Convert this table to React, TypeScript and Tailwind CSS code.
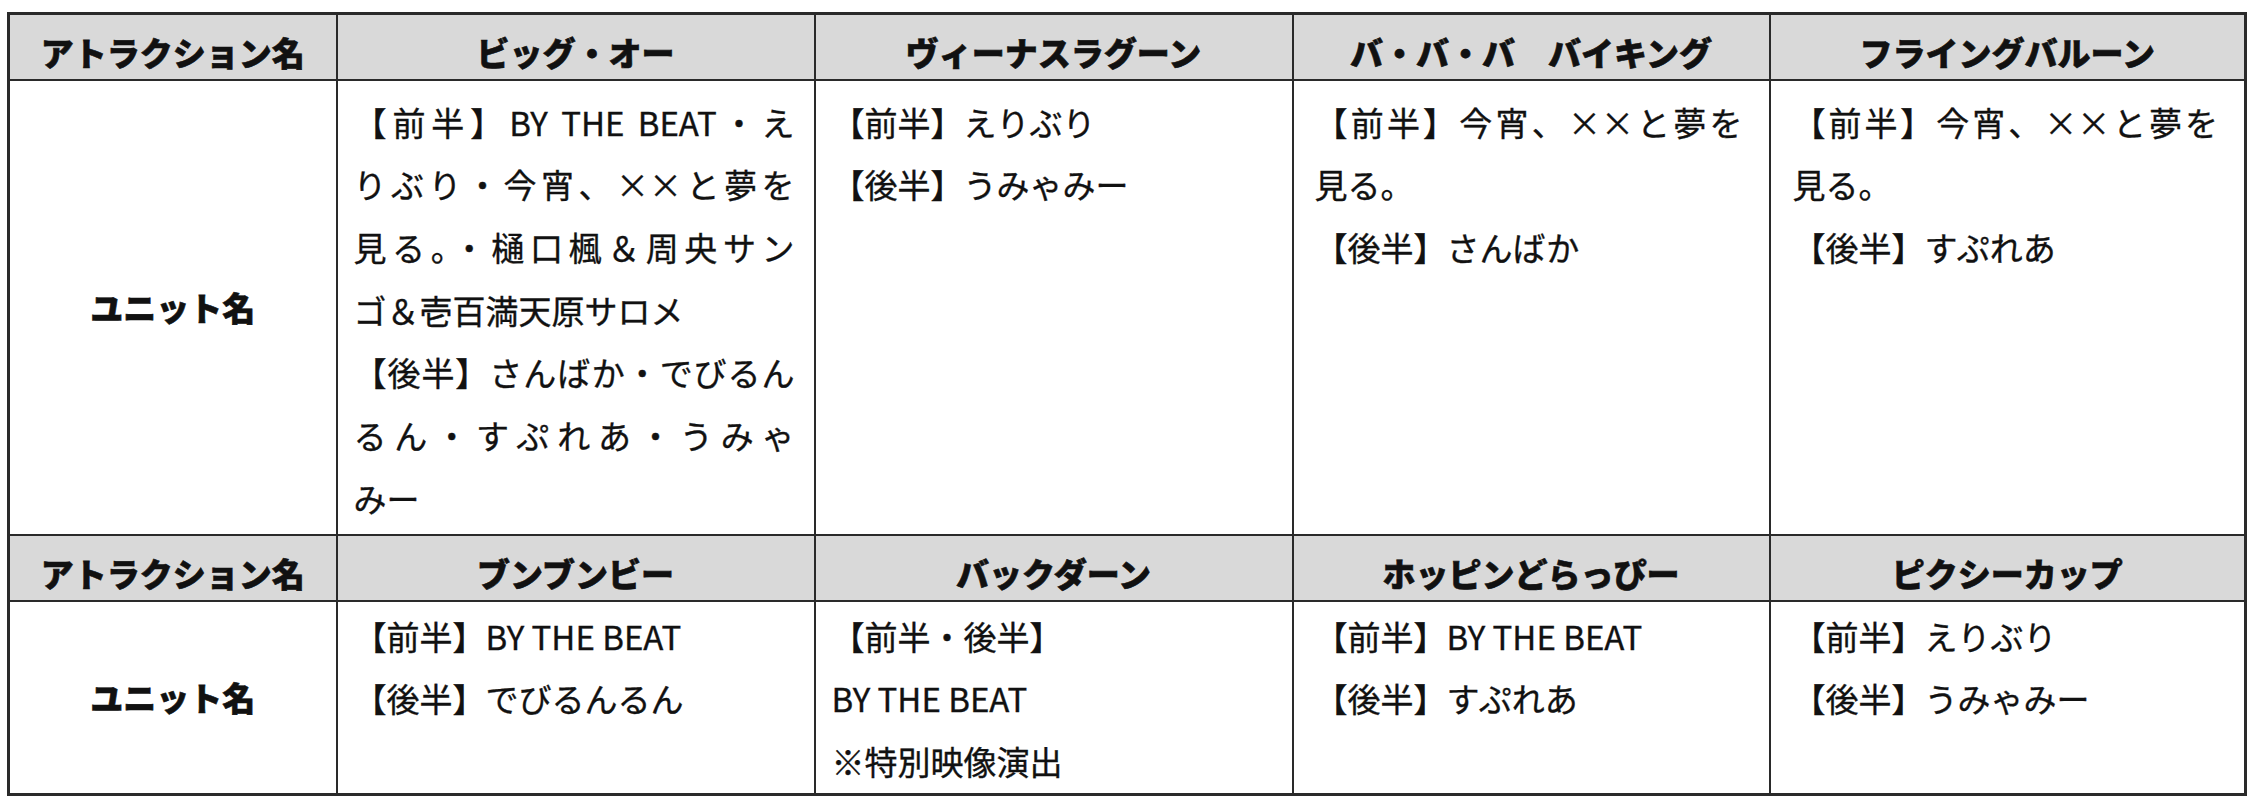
import React from "react";

type Line = { t: string; j?: boolean };

const headers1 = ["ビッグ・オー", "ヴィーナスラグーン", "バ・バ・バ　バイキング", "フライングバルーン"];
const headers2 = ["ブンブンビー", "バックダーン", "ホッピンどらっぴー", "ピクシーカップ"];

const body1: Line[][] = [
  [
    { t: "【前半】BY THE BEAT・え", j: true },
    { t: "りぶり・今宵、××と夢を", j: true },
    { t: "見る。・樋口楓＆周央サン", j: true },
    { t: "ゴ＆壱百満天原サロメ" },
    { t: "【後半】さんばか・でびるん", j: true },
    { t: "るん・すぷれあ・うみゃ", j: true },
    { t: "みー" },
  ],
  [{ t: "【前半】えりぶり" }, { t: "【後半】うみゃみー" }],
  [{ t: "【前半】今宵、××と夢を", j: true }, { t: "見る。" }, { t: "【後半】さんばか" }],
  [{ t: "【前半】今宵、××と夢を", j: true }, { t: "見る。" }, { t: "【後半】すぷれあ" }],
];

const body2: Line[][] = [
  [{ t: "【前半】BY THE BEAT" }, { t: "【後半】でびるんるん" }],
  [{ t: "【前半・後半】" }, { t: "BY THE BEAT" }, { t: "※特別映像演出" }],
  [{ t: "【前半】BY THE BEAT" }, { t: "【後半】すぷれあ" }],
  [{ t: "【前半】えりぶり" }, { t: "【後半】うみゃみー" }],
];

// padding per body column so the justified lines end where the reference does
const pads = ["pl-[16px] pr-[19px]", "pl-[16px] pr-[19px]", "pl-[21px] pr-[26px]", "pl-[22px] pr-[26px]"];

function HeaderRow({ names }: { names: string[] }) {
  return (
    <tr className="h-[66px] bg-[#d9d9d9]">
      <th className="border-2 border-[#2a2a2a] pt-[10px] text-center align-middle text-[33px] font-black leading-[40px] [-webkit-text-stroke:0.6px_#111]">
        アトラクション名
      </th>
      {names.map((n) => (
        <th
          key={n}
          className="whitespace-nowrap border-2 border-[#2a2a2a] pt-[10px] text-center align-middle text-[33px] font-black leading-[40px] [-webkit-text-stroke:0.6px_#111]"
        >
          {n}
        </th>
      ))}
    </tr>
  );
}

function BodyRow({ cells, h, pt }: { cells: Line[][]; h: string; pt: string }) {
  return (
    <tr className={h}>
      <td className="border-2 border-[#2a2a2a] text-center align-middle text-[33px] font-black leading-[40px] [-webkit-text-stroke:0.6px_#111]">
        ユニット名
      </td>
      {cells.map((lines, i) => (
        <td
          key={i}
          className={`border-2 border-[#2a2a2a] align-top text-[33px] leading-[62.7px] [-webkit-text-stroke:0.35px_#111] ${pads[i]} ${pt}`}
        >
          {lines.map((l, k) =>
            l.j ? (
              <div key={k} className="text-justify [text-align-last:justify]">
                {l.t}
              </div>
            ) : (
              <div key={k} className="whitespace-nowrap">
                {l.t}
              </div>
            )
          )}
        </td>
      ))}
    </tr>
  );
}

export default function App() {
  return (
    <div className="h-[800px] w-[2252px] bg-white pl-[7px] pt-[12px] font-['Noto_Sans_CJK_JP',sans-serif] text-[#111]">
      <table className="w-[2237px] table-fixed border-collapse border-[3px] border-[#2a2a2a]">
        <colgroup>
          <col className="w-[328px]" />
          <col className="w-[478px]" />
          <col className="w-[478px]" />
          <col className="w-[477px]" />
          <col className="w-[476px]" />
        </colgroup>
        <tbody>
          <HeaderRow names={headers1} />
          <BodyRow cells={body1} h="h-[455px]" pt="pt-[10px]" />
          <HeaderRow names={headers2} />
          <BodyRow cells={body2} h="h-[192px]" pt="pt-[3px]" />
        </tbody>
      </table>
    </div>
  );
}
